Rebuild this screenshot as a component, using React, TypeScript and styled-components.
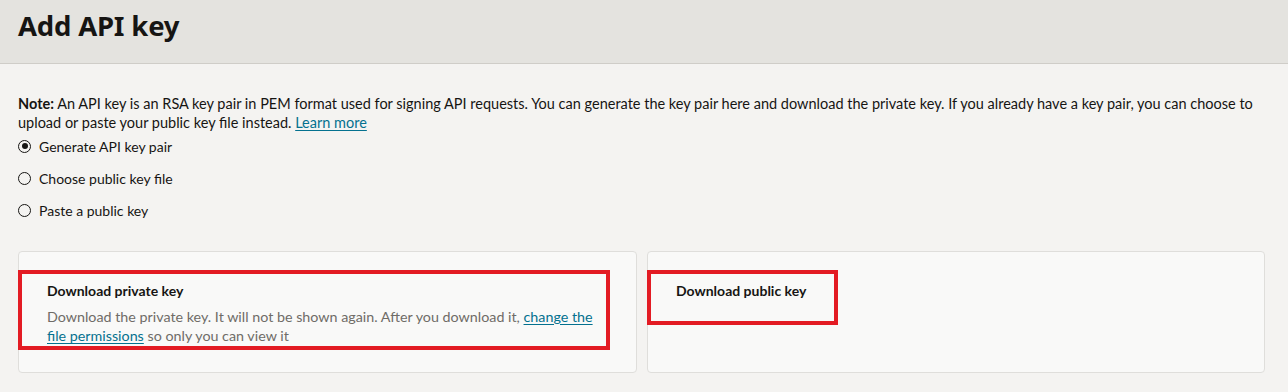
import React, { useState } from 'react';
import styled, { createGlobalStyle } from 'styled-components';

const GlobalStyle = createGlobalStyle`
  html, body {
    margin: 0;
    padding: 0;
    background: #f4f3f1;
    font-family: Lato, 'Noto Sans', sans-serif;
    color: #161513;
  }
`;

const options = ['Generate API key pair', 'Choose public key file', 'Paste a public key'];

const App = () => {
  const [selected, setSelected] = useState(0);

  return (
    <Page>
      <GlobalStyle />
      <Header>
        <Title>Add API key</Title>
      </Header>

      <Content>
        <Note>
          <strong>Note:</strong> An API key is an RSA key pair in PEM format used for signing API requests. You can
          generate the key pair here and download the private key. If you already have a key pair, you can choose to
          upload or paste your public key file instead. <Link href="#">Learn more</Link>
        </Note>

        <RadioGroup>
          {options.map((label, i) => (
            <RadioRow key={label} onClick={() => setSelected(i)}>
              <RadioDot checked={selected === i} />
              <span>{label}</span>
            </RadioRow>
          ))}
        </RadioGroup>

        <Cards>
          <Card>
            <Highlight $width="592px" $height="80px">
              <CardTitle>Download private key</CardTitle>
              <CardText>
                Download the private key. It will not be shown again. After you download it,{' '}
                <Link href="#">change the file permissions</Link> so only you can view it
              </CardText>
            </Highlight>
          </Card>
          <Card>
            <Highlight $width="191px" $height="55px">
              <CardTitle>Download public key</CardTitle>
            </Highlight>
          </Card>
        </Cards>
      </Content>
    </Page>
  );
};

export default App;

const Page = styled.div`
  width: 1288px;
  height: 392px;
  overflow: hidden;
`;

const Header = styled.div`
  height: 64px;
  background-color: #e4e3df;
  border-bottom: 1px solid #cfcdc8;
  display: flex;
  align-items: center;
  padding: 0 18px;
  box-sizing: border-box;
`;

const Title = styled.h1`
  margin: 0 0 12px 0;
  font-family: 'Noto Sans', sans-serif;
  font-size: 27.5px;
  font-weight: 700;
  letter-spacing: -0.2px;
  color: #161513;
`;

const Content = styled.div`
  padding: 30px 22px 0 18px;
`;

const Note = styled.p`
  margin: 0;
  font-size: 14.5px;
  line-height: 19px;
  color: #161513;

  strong {
    font-weight: 700;
  }
`;

const Link = styled.a`
  color: #04718f;
  text-decoration: underline;
  text-underline-offset: 2px;
`;

const RadioGroup = styled.div`
  display: flex;
  flex-direction: column;
  margin-top: -2px;
`;

const RadioRow = styled.label`
  display: flex;
  align-items: center;
  gap: 8px;
  height: 32px;
  font-size: 14px;
  cursor: pointer;
`;

const RadioDot = styled.span<{ checked: boolean }>`
  width: 13px;
  height: 13px;
  border: 1.5px solid #161513;
  border-radius: 50%;
  box-sizing: border-box;
  display: flex;
  align-items: center;
  justify-content: center;
  flex-shrink: 0;

  &::after {
    content: '';
    width: 6px;
    height: 6px;
    border-radius: 50%;
    background: #161513;
    display: ${(p) => (p.checked ? 'block' : 'none')};
  }
`;

const Cards = styled.div`
  display: grid;
  grid-template-columns: 619px 618px;
  gap: 10px;
  margin-top: 25px;
`;

const Card = styled.div`
  height: 122px;
  background-color: #f9f9f8;
  border: 1px solid #dfdedb;
  border-radius: 4px;
  box-sizing: border-box;
  padding-top: 18px;
`;

const Highlight = styled.div<{ $width: string; $height: string }>`
  width: ${(p) => p.$width};
  height: ${(p) => p.$height};
  margin-left: -1px;
  border: 4px solid #e31b23;
  box-sizing: border-box;
  padding: 7px 0 0 25px;
`;

const CardTitle = styled.div`
  font-size: 14px;
  font-weight: 700;
  color: #161513;
  line-height: 19px;
`;

const CardText = styled.div`
  margin-top: 7px;
  font-size: 14.3px;
  line-height: 19px;
  color: #6f6c67;
  padding-right: 10px;
`;
